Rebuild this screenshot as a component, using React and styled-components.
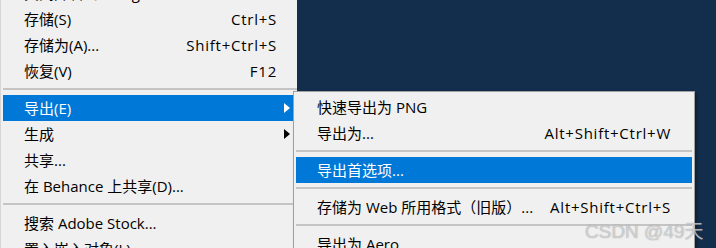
import React from "react";
import styled, { createGlobalStyle } from "styled-components";

const Global = createGlobalStyle`
  html, body { margin: 0; padding: 0; background: #132e4c; overflow: hidden; }
  #root { width: 716px; height: 248px; }
`;

const Screen = styled.div`
  position: relative;
  width: 716px;
  height: 248px;
  overflow: hidden;
  background: #132e4c;
  font-family: "Open Sans", "Noto Sans CJK SC", sans-serif;
  font-size: 15px;
  color: #000;
`;

const MainMenu = styled.div`
  box-sizing: border-box;
  width: 297px;
  margin-top: -20px;
  padding: 0 0 0 2px;
  background: #f0f0f0;
  border-left: 1px solid #d6d6d6;
  display: flex;
  flex-direction: column;
`;

const MainRow = styled.div`
  display: grid;
  grid-template-columns: 1fr auto 20px;
  align-items: center;
  height: 26px;
  padding-left: 21px;
  white-space: nowrap;
  background: ${(p) => (p.$active ? "#0078d7" : "transparent")};
  color: ${(p) => (p.$active ? "#fff" : "#000")};
`;

const Label = styled.span`
  line-height: 26px;
`;

const Shortcut = styled.span`
  line-height: 26px;
  text-align: right;
  letter-spacing: 0.75px;
`;

const ArrowCell = styled.span`
  display: flex;
  align-items: center;
`;

const Arrow = styled.span`
  width: 0;
  height: 0;
  margin-left: 7px;
  border-top: 5px solid transparent;
  border-bottom: 5px solid transparent;
  border-left: 6px solid ${(p) => (p.$active ? "#fff" : "#000")};
`;

const Separator = styled.div`
  height: 2px;
  margin: 4px 0 5px;
  background: #c4c4c4;
`;

const SubMenu = styled.div`
  position: absolute;
  top: 91px;
  left: 293px;
  box-sizing: border-box;
  width: 402px;
  padding: 2px 2px;
  background: #f0f0f0;
  border: 1px solid #a0a0a0;
  box-shadow: 2px 2px 3px rgba(0, 0, 0, 0.35);
  display: flex;
  flex-direction: column;
`;

const SubRow = styled.div`
  display: grid;
  grid-template-columns: 1fr auto;
  align-items: center;
  height: 26px;
  padding: 0 21px 0 21px;
  white-space: nowrap;
  background: ${(p) => (p.$active ? "#0078d7" : "transparent")};
  color: ${(p) => (p.$active ? "#fff" : "#000")};
`;

const Watermark = styled.div`
  position: absolute;
  left: 585px;
  top: 216px;
  font-family: "Liberation Sans", Arial, "Noto Sans CJK SC", sans-serif;
  font-size: 19px;
  color: rgba(255, 255, 255, 0.55);
  text-shadow: 0 0 1px rgba(110, 110, 110, 0.8);
  white-space: nowrap;
  pointer-events: none;
`;

const mainItems = [
  { label: "关闭并转到 Bridge...", shortcut: "Shift+Ctrl+W" },
  { label: "存储(S)", shortcut: "Ctrl+S" },
  { label: "存储为(A)...", shortcut: "Shift+Ctrl+S" },
  { label: "恢复(V)", shortcut: "F12" },
  { sep: true },
  { label: "导出(E)", sub: true, active: true },
  { label: "生成", sub: true },
  { label: "共享..." },
  { label: "在 Behance 上共享(D)..." },
  { sep: true },
  { label: "搜索 Adobe Stock..." },
  { label: "置入嵌入对象(L)..." },
];

const subItems = [
  { label: "快速导出为 PNG" },
  { label: "导出为...", shortcut: "Alt+Shift+Ctrl+W" },
  { sep: true },
  { label: "导出首选项...", active: true },
  { sep: true },
  { label: "存储为 Web 所用格式（旧版）...", shortcut: "Alt+Shift+Ctrl+S" },
  { sep: true },
  { label: "导出为 Aero" },
];

export default function App() {
  return (
    <Screen>
      <Global />
      <MainMenu>
        {mainItems.map((it, i) =>
          it.sep ? (
            <Separator key={i} />
          ) : (
            <MainRow key={i} $active={it.active}>
              <Label>{it.label}</Label>
              <Shortcut>{it.shortcut || ""}</Shortcut>
              <ArrowCell>{it.sub && <Arrow $active={it.active} />}</ArrowCell>
            </MainRow>
          )
        )}
      </MainMenu>
      <SubMenu>
        {subItems.map((it, i) =>
          it.sep ? (
            <Separator key={i} />
          ) : (
            <SubRow key={i} $active={it.active}>
              <Label>{it.label}</Label>
              <Shortcut>{it.shortcut || ""}</Shortcut>
            </SubRow>
          )
        )}
      </SubMenu>
      <Watermark>CSDN @49天</Watermark>
    </Screen>
  );
}
